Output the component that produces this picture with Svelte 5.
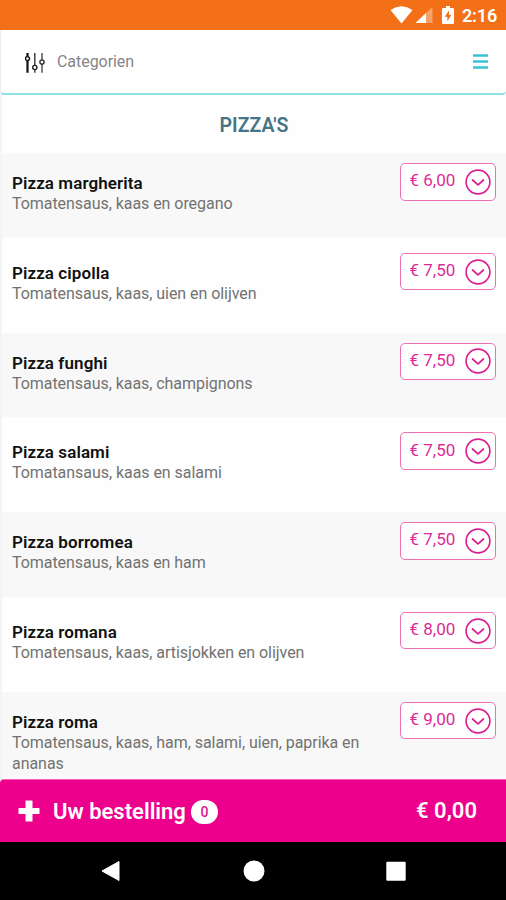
<script lang="ts">
    interface Pizza {
        name: string;
        description: string;
        price: number;
    }

    const pizzas: Pizza[] = [
        { name: "Pizza margherita", description: "Tomatensaus, kaas en oregano", price: 6 },
        { name: "Pizza cipolla", description: "Tomatensaus, kaas, uien en olijven", price: 7.5 },
        { name: "Pizza funghi", description: "Tomatensaus, kaas, champignons", price: 7.5 },
        { name: "Pizza salami", description: "Tomatansaus, kaas en salami", price: 7.5 },
        { name: "Pizza borromea", description: "Tomatensaus, kaas en ham", price: 7.5 },
        { name: "Pizza romana", description: "Tomatensaus, kaas, artisjokken en olijven", price: 8 },
        {
            name: "Pizza roma",
            description: "Tomatensaus, kaas, ham, salami, uien, paprika en ananas",
            price: 9,
        },
    ];

    let count = $state(0);
    let total = $state(0);

    function formatPrice(value: number) {
        return "€ " + value.toFixed(2).replace(".", ",");
    }

    function addPizza(pizza: Pizza) {
        count += 1;
        total += pizza.price;
    }
</script>

<div class="screen">
    <div class="status-bar">
        <svg class="wifi" width="23" height="18" viewBox="0 0 23 18">
            <path d="M0.5 4 Q11.5 -3.4 22.5 4 L11.5 17.6 Z" fill="#fff" />
        </svg>
        <svg class="signal" width="18" height="17" viewBox="0 0 18 17">
            <path d="M17.5 0 V16 H0.5 Z" fill="#fff" opacity="0.35" />
            <path d="M11 6 V16 H0.5 Z" fill="#fff" />
        </svg>
        <svg class="battery" width="12" height="18" viewBox="0 0 12 18">
            <path d="M4 0h4v2h3q1 0 1 1v14q0 1-1 1H1q-1 0-1-1V3q0-1 1-1h3z" fill="#fff" />
            <path d="M7 4.5 2.7 10.7H5.3V15.3L9.4 9H7z" fill="#f37019" />
        </svg>
        <span class="clock">2:16</span>
    </div>

    <header class="toolbar">
        <svg class="sliders" width="20" height="20" viewBox="0 0 20 20" fill="none">
            <path d="M2.5 0v3.4M2.5 7.8v12" stroke="#111" stroke-width="2.2" />
            <path d="M9.8 0v12.2M9.8 16.8v3" stroke="#444" stroke-width="1.5" />
            <path d="M17 0v6.8M17 11.4v8.4" stroke="#555" stroke-width="1.5" />
            <circle cx="2.5" cy="5.6" r="2" stroke="#111" stroke-width="1.4" />
            <circle cx="9.8" cy="14.5" r="2.1" stroke="#222" stroke-width="1.4" />
            <circle cx="17" cy="9.1" r="2.1" stroke="#333" stroke-width="1.4" />
        </svg>
        <span class="toolbar-label">Categorien</span>
        <button class="menu-button" aria-label="Menu">
            <svg width="15" height="15" viewBox="0 0 15 15">
                <path d="M0 1.5h15M0 7.5h15M0 13.5h15" stroke="#38c4d2" stroke-width="2.5" />
            </svg>
        </button>
    </header>

    <main class="menu">
        <h1>PIZZA'S</h1>
        {#each pizzas as pizza}
            <div class="item">
                <div class="item-text">
                    <div class="item-name">{pizza.name}</div>
                    <div class="item-desc">{pizza.description}</div>
                </div>
                <button class="price" onclick={() => addPizza(pizza)}>
                    <span class="amount">{formatPrice(pizza.price)}</span>
                    <svg width="26" height="26" viewBox="0 0 26 26" fill="none" stroke="#dc1c92">
                        <circle cx="13" cy="13" r="11.9" stroke-width="1.6" />
                        <path d="M7.5 11 13 15.8 18.5 11" stroke-width="1.7" stroke-linecap="round" />
                    </svg>
                </button>
            </div>
        {/each}
    </main>

    <footer class="order">
        <svg class="plus" width="22" height="22" viewBox="0 0 22 22">
            <path
                d="M8 0.5h6q.5 0 .5.5v7h6.5q.5 0 .5.5v5q0 .5-.5.5h-6.5v7q0 .5-.5.5h-6q-.5 0-.5-.5v-7H1q-.5 0-.5-.5v-5q0-.5.5-.5h6.5V1q0-.5.5-.5z"
                fill="#fff"
            />
        </svg>
        <span class="order-label">Uw bestelling</span>
        <span class="badge">{count}</span>
        <span class="order-total">{formatPrice(total)}</span>
    </footer>

    <nav class="nav-bar">
        <svg width="22" height="22" viewBox="0 0 22 22">
            <path d="M19 1.5v19L2 11z" fill="#fff" stroke="#fff" stroke-linejoin="round" />
        </svg>
        <svg width="22" height="22" viewBox="0 0 22 22">
            <circle cx="11" cy="11" r="10.5" fill="#fff" />
        </svg>
        <svg width="22" height="22" viewBox="0 0 22 22">
            <rect x="1.3" y="1.7" width="19.4" height="19" rx="1" fill="#fff" />
        </svg>
    </nav>
</div>

<style>
    .screen {
        display: flex;
        flex-direction: column;
        width: 506px;
        height: 900px;
        overflow: hidden;
        background: #fefefe;
        font-family: Roboto, "Liberation Sans", sans-serif;
    }

    button {
        font-family: inherit;
        cursor: pointer;
    }

    .status-bar {
        display: flex;
        flex: none;
        align-items: center;
        justify-content: flex-end;
        height: 30px;
        box-sizing: border-box;
        padding-right: 9px;
        background: #f37019;
    }

    .wifi {
        margin-right: 2px;
    }

    .battery {
        margin: 0 8px 0 9px;
    }

    .clock {
        color: #fff;
        font-size: 18px;
        font-weight: 600;
        letter-spacing: -0.2px;
        line-height: 30px;
        padding-top: 2px;
    }

    .toolbar {
        display: flex;
        flex: none;
        align-items: center;
        height: 65px;
        box-sizing: border-box;
        padding: 0 18px 0 24px;
        background: #fff;
        border-bottom: 2px solid #90e0e5;
        border-left: 1px solid #eee;
        border-radius: 0 0 4px 4px;
    }

    .sliders {
        margin-top: 3px;
    }

    .toolbar-label {
        margin-left: 12px;
        color: #858585;
        font-size: 16px;
        letter-spacing: -0.05px;
    }

    .menu-button {
        display: flex;
        margin: -1px 0 0 auto;
        padding: 0;
        background: none;
        border: none;
    }

    .menu {
        flex: 1;
        min-height: 0;
        overflow: hidden;
        border-left: 2px solid #f4f4f4;
    }

    h1 {
        margin: 0;
        height: 58px;
        color: #467585;
        font-size: 19.5px;
        font-weight: 600;
        line-height: 61px;
        text-align: center;
    }

    .item {
        display: flex;
        align-items: flex-start;
        justify-content: space-between;
        min-height: 84.8px;
        box-sizing: border-box;
        margin-bottom: 5px;
        padding: 10px 10px 0;
    }

    .item:nth-of-type(odd) {
        background: #f8f8f8;
    }

    .item-text {
        width: 360px;
        padding-top: 10px;
    }

    .item-name {
        color: #111;
        font-size: 17px;
        font-weight: 600;
        letter-spacing: 0.08px;
        line-height: 20px;
    }

    .item-desc {
        color: #727272;
        font-size: 16px;
        letter-spacing: -0.05px;
        line-height: 21.7px;
    }

    .price {
        display: flex;
        flex: none;
        align-items: center;
        justify-content: space-between;
        width: 96.5px;
        height: 37.5px;
        box-sizing: border-box;
        padding: 0 4px 0 9px;
        color: #dc2b97;
        background: #fff;
        border: 1.5px solid #ec6fae;
        border-radius: 5px;
        font-size: 17px;
    }

    .amount {
        padding-bottom: 3px;
    }

    .order {
        display: flex;
        flex: none;
        align-items: center;
        height: 63px;
        box-sizing: border-box;
        padding: 0 29px 0 18px;
        color: #fff;
        background: #ed008c;
        border-top: 1px solid #f35db5;
        border-radius: 4px 0 0 0;
    }

    .order-label {
        margin-left: 13px;
        font-size: 22px;
        font-weight: 600;
    }

    .badge {
        width: 27px;
        height: 24px;
        margin: 2px 0 0 5px;
        color: #d51b8a;
        background: #fff;
        border-radius: 12px;
        font-size: 14px;
        font-weight: 500;
        line-height: 24px;
        text-align: center;
    }

    .order-total {
        margin-left: auto;
        padding-bottom: 2px;
        font-size: 22px;
        font-weight: 600;
    }

    .nav-bar {
        display: flex;
        flex: none;
        align-items: center;
        justify-content: space-between;
        height: 58px;
        box-sizing: border-box;
        padding: 0 99px 0 100px;
        background: #000;
    }
</style>
